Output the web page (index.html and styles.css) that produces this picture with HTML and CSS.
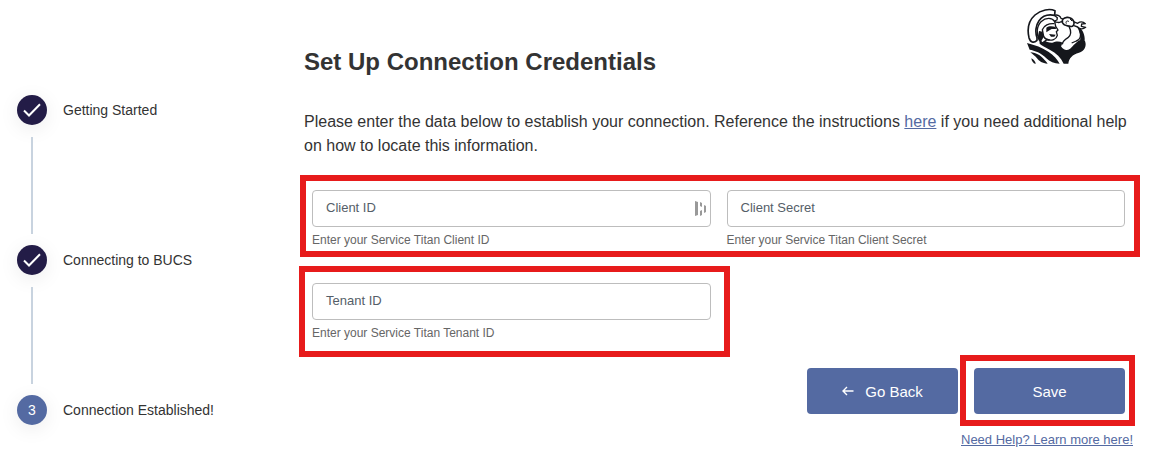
FILE: index.html
```
<!DOCTYPE html>
<html lang="en">
<head>
    <meta charset="UTF-8">
    <meta name="viewport" content="width=device-width, initial-scale=1.0">
    <title>Set Up Connection Credentials</title>
    <link rel="stylesheet" href="styles.css">
</head>
<body>
    <div class="page">
        <ol class="steps">
            <li class="step">
                <span class="step-circle done">
                    <svg width="18" height="14" viewBox="0 0 18 14"><path d="M1 7.5 6 12.5 17 1.2" fill="none" stroke="#fff" stroke-width="2"/></svg>
                </span>
                <span class="step-label">Getting Started</span>
            </li>
            <li class="step">
                <span class="step-circle done">
                    <svg width="18" height="14" viewBox="0 0 18 14"><path d="M1 7.5 6 12.5 17 1.2" fill="none" stroke="#fff" stroke-width="2"/></svg>
                </span>
                <span class="step-label">Connecting to BUCS</span>
            </li>
            <li class="step">
                <span class="step-circle">3</span>
                <span class="step-label">Connection Established!</span>
            </li>
        </ol>

        <main class="content">
            <header class="header">
                <h1>Set Up Connection Credentials</h1>
                <svg class="logo" viewBox="21 23 186 174" role="img" aria-label="Service Titan">
                    <!-- torso and cape -->
                    <g fill="#15171c">
                        <path d="M60 98C66 116 82 128 100 127C112 122 120 122 132 127L126 138C138 156 152 150 164 134L180 120L198 122C204 138 196 152 180 157C160 162 150 174 148 190L134 190C126 172 112 158 92 148C82 142 68 136 62 130Z"/>
                        <path d="M24 128C48 134 70 142 88 154C104 164 116 178 122 190C106 190 92 184 82 174C68 158 46 150 32 148Z"/>
                        <path d="M34 156C54 158 64 166 72 174C78 180 82 184 86 190C70 190 60 182 54 174C48 167 42 162 34 156Z"/>
                        <path d="M37 174C44 178 50 184 50 191C42 189 38 182 37 174Z"/>
                    </g>
                    <!-- arm -->
                    <path d="M150 76C154 94 156 104 146 112C136 118 130 124 128 132C136 148 152 136 162 126C178 124 186 114 185 100C184 90 180 84 176 78Z" fill="#fff"/>
                    <g fill="none" stroke="#15171c" stroke-width="4" stroke-linejoin="round">
                        <path d="M150 78C157 92 156 105 147 112C137 118 131 122 130 132"/>
                        <path d="M182 88C188 106 184 118 172 122L158 128"/>
                    </g>
                    <path d="M174 80 184 84C194 94 200 110 196 130L182 126C186 112 184 96 174 80Z" fill="#15171c"/>
                    <!-- wrench and fist -->
                    <g fill="none" stroke="#15171c" stroke-width="4" stroke-linejoin="round">
                        <path d="M106 45C116 42 124 47 126 54L136 58M106 62C112 68 122 67 126 64L132 66M106 45 115 52 114 59 106 62"/>
                        <path d="M163 64 176 69C182 64 192 63 199 70L188 71 187 78 200 81C192 88 182 87 176 80L165 76"/>
                        <path d="M131 68C127 58 134 52 144 51C154 50 164 58 165 66C166 74 162 80 154 78C144 75 136 78 131 68Z" fill="#fff" stroke-width="5"/>
                        <path d="M142 70C139 64 144 59 150 64M153 56 159 62" stroke-width="3"/>
                    </g>
                    <!-- helmet -->
                    <g fill="#fff" stroke="#15171c" stroke-width="5" stroke-linejoin="round">
                        <path d="M54 120C44 130 34 126 30 112C24 86 30 60 48 44C66 28 92 24 108 31L107 45C88 41 70 47 60 61C50 75 48 96 54 112Z"/>
                        <path d="M60 118C52 102 52 78 66 64C82 50 100 52 107 64L110 78 117 89 112 94 115 105C112 118 98 122 84 118L70 128Z" stroke-width="4"/>
                        <path d="M106 70C90 68 74 76 70 88L74 108C78 116 86 119 92 118" fill="none" stroke-width="4"/>
                    </g>
                    <path d="M82 82C90 76 100 77 110 80L111 86 98 86 89 91 82 96Z" fill="#15171c"/>
                    <path d="M90 101 110 103 106 109 96 109Z" fill="#15171c"/>
                    <path d="M60 92 71 94 74 110 65 126 56 112Z" fill="#15171c"/>
                </svg>
            </header>

            <p class="intro">Please enter the data below to establish your connection. Reference the instructions <a href="#">here</a> if you need additional help on how to locate this information.</p>

            <form class="form">
                <div class="row highlight highlight-client">
                    <div class="field">
                        <div class="control">
                            <input type="text" id="client-id" aria-describedby="client-id-help">
                            <label for="client-id">Client ID</label>
                            <svg class="fill-icon" width="12" height="16" viewBox="0 0 12 16" fill="#999">
                                <path d="M0 0 3 1V14L0 15ZM5 1 7 2V6L5 5ZM5 10 7 9V14L5 15ZM9 4 11 5V11L9 12Z"/>
                            </svg>
                        </div>
                        <p class="help" id="client-id-help">Enter your Service Titan Client ID</p>
                    </div>
                    <div class="field">
                        <div class="control">
                            <input type="text" id="client-secret" aria-describedby="client-secret-help">
                            <label for="client-secret">Client Secret</label>
                        </div>
                        <p class="help" id="client-secret-help">Enter your Service Titan Client Secret</p>
                    </div>
                </div>
                <div class="row">
                    <div class="field highlight highlight-tenant">
                        <div class="control">
                            <input type="text" id="tenant-id" aria-describedby="tenant-id-help">
                            <label for="tenant-id">Tenant ID</label>
                        </div>
                        <p class="help" id="tenant-id-help">Enter your Service Titan Tenant ID</p>
                    </div>
                </div>
                <div class="buttons">
                    <button type="button">
                        <svg width="12" height="10" viewBox="0 0 12 10"><path d="M11.500 5H1M5 1 1 5 5 9" fill="none" stroke="#fff" stroke-width="1.400"/></svg>
                        Go Back
                    </button>
                    <div class="highlight highlight-save">
                        <button type="submit">Save</button>
                    </div>
                </div>
            </form>

            <a class="need-help" href="#">Need Help? Learn more here!</a>
        </main>
    </div>
</body>
</html>
```
FILE: styles.css
```
* {
    box-sizing: border-box;
}
body {
    margin: 0;
    background: #fff;
    color: #333;
    font-family: "Liberation Sans", Arial, sans-serif;
}
h1, p, ol {
    margin: 0;
    padding: 0;
}
a {
    color: #546aa2;
}
.page {
    display: grid;
    grid-template-columns: 287px 1fr;
    padding: 8px 19px 24px 17px;
}

/* Steps */
.steps {
    list-style: none;
    padding-top: 87px;
}
.step {
    display: grid;
    grid-template-columns: 30px 1fr;
    align-items: center;
    column-gap: 16px;
    font-size: 14px;
}
.step-circle {
    display: flex;
    align-items: center;
    justify-content: center;
    height: 30px;
    border-radius: 50%;
    background: #546aa2;
    color: #fff;
    box-shadow: 0 4px 20px rgba(0, 0, 0, 0.08);
}
.step-circle.done {
    background: #231c47;
}
.step:not(:last-child)::after {
    content: "";
    width: 2px;
    height: 97px;
    margin: 12px 0 11px;
    justify-self: center;
    background: #c8d3df;
}

/* Header */
.header {
    display: flex;
    justify-content: space-between;
    align-items: flex-start;
    padding-right: 45px;
}
h1 {
    padding-top: 38px;
    font-size: 24px;
    line-height: 32px;
}
.logo {
    width: 62px;
    height: 58px;
}
.intro {
    margin-top: 32px;
    font-size: 16px;
    line-height: 24px;
}

/* Form */
.form {
    margin-top: 32px;
    padding: 0 8px;
}
.row {
    display: grid;
    grid-template-columns: 1fr 1fr;
    gap: 16px;
}
.row + .row {
    margin-top: 35px;
}
.control {
    position: relative;
}
.control input {
    display: block;
    width: 100%;
    height: 37px;
    padding: 0 28px 0 14px;
    border: 1px solid #bdbdbd;
    border-radius: 4px;
    background: #fff;
    font: inherit;
    font-size: 13px;
}
.control label {
    position: absolute;
    top: 10px;
    left: 14px;
    color: #555e68;
    font-size: 13px;
    line-height: 16px;
}
.fill-icon {
    position: absolute;
    top: 11px;
    right: 4px;
}
.help {
    margin-top: 5px;
    color: #666;
    font-size: 12px;
    line-height: 16px;
}
.buttons {
    display: flex;
    justify-content: flex-end;
    gap: 16px;
    margin-top: 27px;
}
button {
    display: flex;
    align-items: center;
    justify-content: center;
    gap: 11px;
    width: 151px;
    height: 46px;
    border: 0;
    border-radius: 4px;
    background: #546aa2;
    color: #fff;
    font: inherit;
    font-size: 15px;
}
.need-help {
    display: block;
    width: fit-content;
    margin: 18px 0 0 auto;
    font-size: 13px;
    line-height: 16px;
}

/* Red frames around what the user has to fill in or click */
.highlight {
    position: relative;
}
.highlight::before {
    content: "";
    position: absolute;
    border: 6px solid #e71b1b;
    pointer-events: none;
}
.highlight-client::before {
    inset: -15px -15px -9px -12px;
}
.highlight-tenant::before {
    inset: -17px -19px -16px -13px;
}
.highlight-save::before {
    inset: -13px -10px -12px -14px;
}
```
